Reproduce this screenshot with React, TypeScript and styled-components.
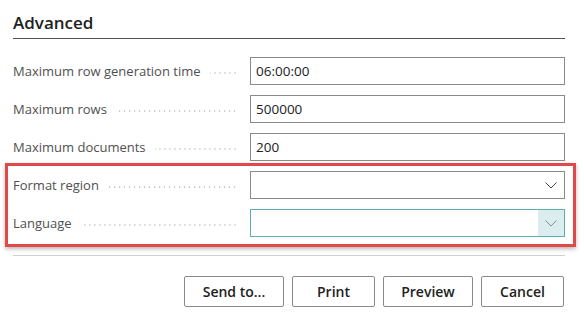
import React from 'react';
import styled, { createGlobalStyle } from 'styled-components';

const GlobalStyle = createGlobalStyle`
  body {
    margin: 0;
    background: #ffffff;
    font-family: 'Open Sans', 'Noto Sans', sans-serif;
    color: #212121;
  }
`;

const Page = styled.div`
  width: 584px;
  box-sizing: border-box;
  padding: 0 19px 0 13px;
`;

const Title = styled.h2`
  margin: 0;
  padding: 11px 0 3px;
  line-height: 24px;
  font-size: 17px;
  font-weight: 600;
  color: #212121;
  border-bottom: 1px solid #505050;
`;

const Fields = styled.div`
  display: flex;
  flex-direction: column;
  gap: 10px;
  margin-top: 18px;
`;

const Highlight = styled.div`
  display: flex;
  flex-direction: column;
  gap: 10px;
  margin: 2px -11px 0 -8px;
  padding: 5px 8px 7px 5px;
  border: 3px solid #e0484a;
  box-shadow: 0 2px 4px rgba(0, 0, 0, 0.28);
`;

const Row = styled.div`
  display: flex;
  align-items: stretch;
  height: 28px;
`;

const Label = styled.div`
  flex: 0 0 224px;
  display: flex;
  align-items: center;
  margin-right: 13px;
  font-size: 13px;
  color: #505050;
  white-space: nowrap;
  overflow: hidden;
`;

const Leader = styled.span`
  flex: 1;
  height: 2px;
  margin: 3px 0 0 9px;
  background-image: radial-gradient(circle, #c4c4c4 0.8px, transparent 1.1px);
  background-size: 5px 2px;
  background-position: right center;
`;

const TextInput = styled.input`
  flex: 1;
  min-width: 0;
  box-sizing: border-box;
  height: 28px;
  margin: 0;
  padding: 0 5px;
  border: 1px solid #8a8a8a;
  border-radius: 0;
  outline: none;
  font-family: 'Open Sans', 'Noto Sans', sans-serif;
  font-size: 13.5px;
  color: #212121;
  background: #ffffff;
`;

const SelectBox = styled.div<{ $focused?: boolean }>`
  flex: 1;
  min-width: 0;
  box-sizing: border-box;
  height: 28px;
  display: flex;
  justify-content: flex-end;
  border: 1px solid ${({ $focused }) => ($focused ? '#5aaeb3' : '#8a8a8a')};
  background: #ffffff;
`;

const ChevronArea = styled.div<{ $focused?: boolean }>`
  width: 26px;
  display: flex;
  align-items: center;
  justify-content: center;
  background: ${({ $focused }) => ($focused ? '#dcedf0' : 'transparent')};
  color: ${({ $focused }) => ($focused ? '#7a9598' : '#444444')};
`;

const Divider = styled.div`
  margin-top: 8px;
  border-top: 1px solid #cfcfcf;
`;

const Actions = styled.div`
  display: flex;
  justify-content: flex-end;
  gap: 8px;
  margin-top: 20px;
  padding-right: 1px;
`;

const Button = styled.button<{ $width: number }>`
  box-sizing: border-box;
  height: 31px;
  width: ${({ $width }) => $width}px;
  padding: 0;
  border: 1px solid #8a8a8a;
  border-radius: 2px;
  background: #ffffff;
  font-family: 'Open Sans', 'Noto Sans', sans-serif;
  font-size: 14px;
  font-weight: 600;
  color: #212121;
  cursor: pointer;
`;

const Chevron: React.FC = () => (
  <svg width="12" height="7" viewBox="0 0 12 7" fill="none">
    <path d="M0.5 0.5 L6 6 L11.5 0.5" stroke="currentColor" strokeWidth="1" />
  </svg>
);

const TextField: React.FC<{ label: string; value: string }> = ({ label, value }) => (
  <Row>
    <Label>
      {label}
      <Leader />
    </Label>
    <TextInput readOnly defaultValue={value} />
  </Row>
);

const SelectField: React.FC<{ label: string; focused?: boolean }> = ({ label, focused }) => (
  <Row>
    <Label>
      {label}
      <Leader />
    </Label>
    <SelectBox $focused={focused}>
      <ChevronArea $focused={focused}>
        <Chevron />
      </ChevronArea>
    </SelectBox>
  </Row>
);

const App: React.FC = () => {
  return (
    <>
      <GlobalStyle />
      <Page>
        <Title>Advanced</Title>
        <Fields>
          <TextField label="Maximum row generation time" value="06:00:00" />
          <TextField label="Maximum rows" value="500000" />
          <TextField label="Maximum documents" value="200" />
        </Fields>
        <Highlight>
          <SelectField label="Format region" />
          <SelectField label="Language" focused />
        </Highlight>
        <Divider />
        <Actions>
          <Button $width={100}>Send to...</Button>
          <Button $width={83}>Print</Button>
          <Button $width={90}>Preview</Button>
          <Button $width={83}>Cancel</Button>
        </Actions>
      </Page>
    </>
  );
};

export default App;
